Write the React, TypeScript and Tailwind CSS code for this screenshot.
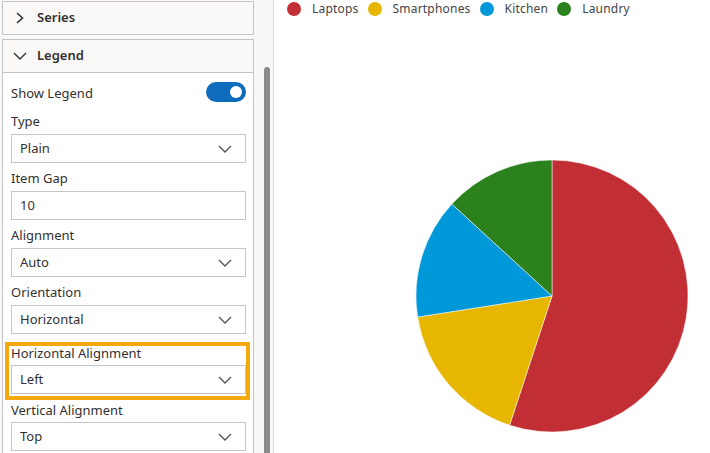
import type { ReactNode } from 'react';

// Pie data (values drive the slice angles)
const seriesData = [
  { name: 'Laptops', value: 55.05, color: '#c12e34' },
  { name: 'Smartphones', value: 17.48, color: '#e6b600' },
  { name: 'Kitchen', value: 14.3, color: '#0098d9' },
  { name: 'Laundry', value: 13.17, color: '#2b821d' },
];

const fields = [
  { label: 'Type', value: 'Plain', kind: 'select' },
  { label: 'Item Gap', value: '10', kind: 'input' },
  { label: 'Alignment', value: 'Auto', kind: 'select' },
  { label: 'Orientation', value: 'Horizontal', kind: 'select' },
];

function ChevronDown({ className = '' }: { className?: string }) {
  return (
    <svg width="14" height="8" viewBox="0 0 14 8" className={className}>
      <polyline points="1,1 7,7 13,1" fill="none" stroke="currentColor" strokeWidth="1.4" />
    </svg>
  );
}

function ChevronRight() {
  return (
    <svg width="9" height="12" viewBox="0 0 9 12" className="text-[#323130]">
      <polyline points="2,1 7.5,6 2,11" fill="none" stroke="currentColor" strokeWidth="1.6" />
    </svg>
  );
}

function SelectBox({ value, kind }: { value: string; kind: string }) {
  return (
    <div className="flex h-[29px] items-center justify-between border border-[#c6c6c6] bg-white pl-[8px] pr-[13px] text-[13px] text-[#323130]">
      <span className="pt-[1px]">{value}</span>
      {kind === 'select' && <ChevronDown className="text-[#555]" />}
    </div>
  );
}

function Field({ label, children }: { label: string; children: ReactNode }) {
  return (
    <div className="mt-[5px] first:mt-[9px]">
      <div className="h-[20px] text-[13px] leading-[20px] text-[#323130]">{label}</div>
      <div className="mt-[3px]">{children}</div>
    </div>
  );
}

function PieChart() {
  const cx = 278;
  const cy = 278;
  const r = 136;
  const total = seriesData.reduce((s, d) => s + d.value, 0);
  let start = 0;

  const point = (deg: number) => {
    const rad = (deg * Math.PI) / 180;
    return `${(cx + r * Math.sin(rad)).toFixed(2)} ${(cy - r * Math.cos(rad)).toFixed(2)}`;
  };

  return (
    <svg width="436" height="435" className="block">
      {seriesData.map(d => {
        const sweep = (d.value / total) * 360;
        const end = start + sweep;
        const path = `M${cx} ${cy} L${point(start)} A${r} ${r} 0 ${sweep > 180 ? 1 : 0} 1 ${point(end)} Z`;
        start = end;
        return <path key={d.name} d={path} fill={d.color} stroke="#fff" strokeWidth="0.5" />;
      })}
    </svg>
  );
}

export default function App() {
  return (
    <div className="flex h-[453px] w-[710px] overflow-hidden bg-white font-['Noto_Sans',sans-serif]">
      {/* settings panel */}
      <aside className="flex w-[274px] shrink-0 border-r border-[#dcdcdc] bg-[#f8f8f8]">
        <div className="w-[254px] pl-[2px] pt-[1px]">
          <div className="flex h-[34px] w-[252px] items-center gap-[13px] border border-[#c4c4c4] bg-[#faf9f8] pl-[12px]">
            <ChevronRight />
            <span className="text-[13px] font-semibold text-[#323130]">Series</span>
          </div>

          <div className="mt-[4px] w-[252px] border border-b-0 border-[#c4c4c4] bg-white">
            <div className="flex h-[33px] items-center gap-[10px] border-b border-[#c4c4c4] bg-[#faf9f8] pl-[10px]">
              <ChevronDown className="text-[#323130]" />
              <span className="text-[13px] font-semibold text-[#323130]">Legend</span>
            </div>

            <div className="pb-4 pl-[8px] pr-[7px] pt-[9px]">
              <div className="flex h-[20px] items-center justify-between">
                <span className="mt-[4px] text-[13px] text-[#323130]">Show Legend</span>
                <div className="flex h-[20px] w-[40px] items-center justify-end rounded-full bg-[#0f6cbd] pr-[4px]">
                  <div className="h-[12px] w-[12px] rounded-full bg-white" />
                </div>
              </div>

              <div className="mt-[9px]">
                {fields.map(f => (
                  <Field key={f.label} label={f.label}>
                    <SelectBox value={f.value} kind={f.kind} />
                  </Field>
                ))}
              </div>

              {/* highlighted field */}
              <div className="-ml-[6px] -mr-[4px] mt-[8px] border-4 border-[#f5a80f] pb-[2px] pl-[2px]">
                <div className="h-[14px] text-[13px] leading-[14px] text-[#323130]">Horizontal Alignment</div>
                <div className="mt-[5px]">
                  <SelectBox value="Left" kind="select" />
                </div>
              </div>

              <div className="h-[20px] text-[13px] leading-[20px] text-[#323130]">Vertical Alignment</div>
              <div className="mt-[2px]">
                <SelectBox value="Top" kind="select" />
              </div>
            </div>
          </div>
        </div>

        <div className="flex flex-1 justify-end pr-[3px] pt-[67px]">
          <div className="w-[6px] rounded-t-full bg-[#8a8a8a]" />
        </div>
      </aside>

      {/* chart */}
      <main className="flex-1">
        <div className="flex h-[18px] items-start gap-[9px] pl-[13px] pt-[2px]">
          {seriesData.map(d => (
            <div key={d.name} className="flex h-[14px] items-center gap-[11px]">
              <span className="h-[14px] w-[14px] rounded-full" style={{ backgroundColor: d.color }} />
              <span className="text-[12px] leading-[14px] tracking-[0.2px] text-[#444]">{d.name}</span>
            </div>
          ))}
        </div>
        <PieChart />
      </main>
    </div>
  );
}
